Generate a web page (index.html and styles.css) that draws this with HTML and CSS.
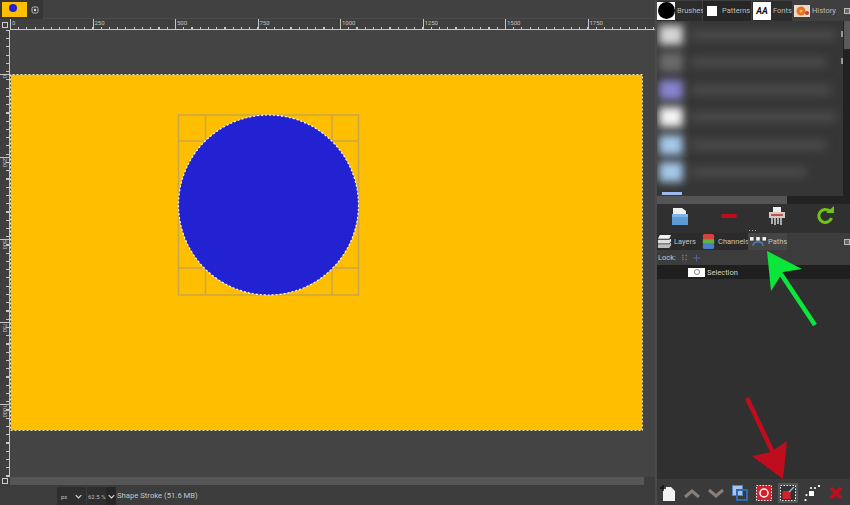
FILE: index.html
```html
<!DOCTYPE html>
<html lang="en">
<head>
<meta charset="utf-8">
<title>Shape Stroke</title>
<link rel="stylesheet" href="styles.css">
</head>
<body>
<div class="app">
  <section class="left">
    <div class="image-tabs">
      <div class="image-tab">
        <div class="thumb"><span class="thumb-dot"></span></div>
        <svg class="close" viewBox="0 0 8 8"><rect x="1" y="1" width="6" height="6" rx="1.5" fill="none" stroke="#bbb" stroke-width="1"/><circle cx="4" cy="4" r="1.2" fill="#ddd"/></svg>
      </div>
    </div>
    <div class="h-ruler-row">
      <div class="corner"><span class="corner-mark"></span></div>
      <div class="h-ruler">
        <span class="tick-label">0</span><span class="tick-label">250</span><span class="tick-label">500</span><span class="tick-label">750</span><span class="tick-label">1000</span><span class="tick-label">1250</span><span class="tick-label">1500</span><span class="tick-label">1750</span>
      </div>
    </div>
    <div class="work">
      <div class="v-ruler">
        <span class="v-label">0</span><span class="v-label">250</span><span class="v-label">500</span><span class="v-label">750</span><span class="v-label">1000</span>
      </div>
      <div class="canvas">
        <div class="image">
          <svg class="art" viewBox="0 0 633 357">
            <g fill="none" stroke="#c9a64a" stroke-width="1.5">
              <rect x="168.500" y="41" width="180" height="180"/>
              <path d="M195.500 41v180M322 41v180M168.500 67h180M168.500 194h180"/>
            </g>
            <circle cx="258.500" cy="131" r="90" fill="#2222d2"/>
            <circle cx="258.500" cy="131" r="90" fill="none" stroke="#fff" stroke-width="1.200" stroke-dasharray="2 2"/>
            <rect x="0.500" y="0.500" width="632" height="356" fill="none" stroke="#ffe9a0" stroke-width="1"/>
            <rect x="0.500" y="0.500" width="632" height="356" fill="none" stroke="#4a4a3a" stroke-width="1" stroke-dasharray="2 2"/>
          </svg>
        </div>
      </div>
    </div>
    <div class="h-scroll-row">
      <div class="corner-bottom"><span class="corner-mark"></span></div>
      <div class="h-scroll"></div>
    </div>
    <div class="status">
      <div class="select unit">px<svg class="chev" viewBox="0 0 10 6"><path d="M1 1l4 4 4-4" fill="none" stroke="#ddd" stroke-width="1.500"/></svg></div>
      <div class="select zoom">62.5 %<span class="chev-box"><svg class="chev" viewBox="0 0 10 6"><path d="M1 1l4 4 4-4" fill="none" stroke="#ddd" stroke-width="1.500"/></svg></span></div>
      <span class="status-text">Shape Stroke (51.6 MB)</span>
    </div>
  </section>

  <aside class="dock">
    <div class="dock-tabs">
      <div class="dock-tab tab-brushes"><span class="ico white-ico"><span class="brush-dot"></span></span>Brushes</div>
      <div class="dock-tab tab-patterns"><span class="ico"><span class="pattern-sq"></span></span>Patterns</div>
      <div class="dock-tab tab-fonts"><span class="ico white-ico font-ico">AA</span>Fonts</div>
      <div class="dock-tab tab-plain">
        <svg class="ico-history" viewBox="0 0 16 12"><rect width="16" height="12" fill="#e9dccb"/><circle cx="7" cy="6" r="4.500" fill="#e8702a"/><circle cx="7" cy="6" r="1.500" fill="#f5c13c"/><circle cx="13" cy="8" r="2" fill="#c8452a"/></svg>History
      </div>
      <span class="dock-menu"></span>
    </div>
    <div class="font-panel">
      <div class="font-list">
        <div class="font-row"><span class="blob blob-grey"></span><span class="blur-line line-a"></span></div>
        <div class="font-row"><span class="blob blob-dim"></span><span class="blur-line line-b"></span></div>
        <div class="font-row"><span class="blob blob-violet"></span><span class="blur-line line-c"></span></div>
        <div class="font-row"><span class="blob blob-white"></span><span class="blur-line line-a"></span></div>
        <div class="font-row"><span class="blob blob-blue"></span><span class="blur-line line-d"></span></div>
        <div class="font-row"><span class="blob blob-blue"></span><span class="blur-line line-e"></span></div>
        <span class="selected-bit"></span>
        <span class="row-mark mark-one"></span>
        <span class="row-mark mark-two"></span>
      </div>
      <div class="list-scroll"><span class="list-thumb"></span></div>
    </div>
    <div class="list-hscroll"><span class="list-hthumb"></span></div>
    <div class="font-actions">
      <svg class="act" viewBox="0 0 20 20"><path d="M3 2h9l4 3v5H3z" fill="#f1f1f1"/><path d="M2 8h16v11H2z" fill="#5b9bd8"/><path d="M2 8h16v3H2z" fill="#7fb4e6"/></svg>
      <svg class="act" viewBox="0 0 20 20"><rect x="2" y="8" width="16" height="4" rx="2" fill="#c00d1e"/></svg>
      <svg class="act" viewBox="0 0 20 20"><rect x="6" y="1" width="8" height="6" fill="#eee"/><rect x="2" y="6" width="16" height="6" fill="#d9c9bd"/><rect x="4" y="8" width="12" height="2" fill="#b55"/><path d="M5 12v6M8 12v7M11 12v6M14 12v7" stroke="#eee" stroke-width="1.300"/></svg>
      <svg class="act" viewBox="0 0 20 20"><path d="M15.500 12a6.500 6.500 0 1 1-2-7" fill="none" stroke="#71c416" stroke-width="3"/><path d="M10 7h8V0z" fill="#71c416"/></svg>
    </div>
    <div class="panel-tabs">
      <div class="panel-tab tab-layers">
        <svg class="pt-ico" viewBox="0 0 16 18"><path d="M3 2h12l-2 4H1z" fill="#f4f4f4"/><path d="M1 7h12l2-1v3l-2 2H1z" fill="#ddd"/><path d="M1 12h12l2-2v3l-2 3H1z" fill="#bbb"/></svg>Layers
      </div>
      <div class="panel-tab tab-channels">
        <svg class="pt-ico" viewBox="0 0 14 18"><rect x="1" y="1" width="12" height="6" rx="2" fill="#d6433a"/><rect x="1" y="6.500" width="12" height="5" fill="#5fb244"/><rect x="1" y="11" width="12" height="6" rx="2" fill="#4a7fc4"/></svg>Channels
      </div>
      <div class="panel-tab active">
        <span class="tab-dots"></span>
        <svg class="pt-ico wide" viewBox="0 0 18 14"><path d="M3 12C4 6 14 6 15 12" fill="none" stroke="#4f87c7" stroke-width="1.300"/><rect x="0" y="2" width="4" height="4" fill="#f4f4f4"/><rect x="7" y="2" width="4" height="4" fill="#f4f4f4"/><rect x="14" y="2" width="4" height="4" fill="#f4f4f4"/></svg>Paths
      </div>
      <span class="dock-menu"></span>
    </div>
    <div class="lock-row">Lock:
      <svg class="lock-ico" viewBox="0 0 8 10"><path d="M2 1v8M6 1v3M6 6v3" stroke="#9a9a9a" stroke-width="1.200" stroke-dasharray="1.500 1"/></svg>
      <svg class="lock-ico" viewBox="0 0 10 10"><path d="M5 0v10M0 5h10" stroke="#47679a" stroke-width="1.500"/></svg>
    </div>
    <div class="path-row">
      <span class="path-thumb"><span class="path-ring"></span></span>Selection
    </div>
    <div class="path-empty"></div>
    <div class="path-tools">
      <svg class="tool" viewBox="0 0 16 16"><path d="M3 2h8l4 4v10H3z" fill="#f2f2f2"/><path d="M3 0v6M0 3h6" stroke="#111" stroke-width="1.500"/></svg>
      <svg class="tool" viewBox="0 0 16 16"><path d="M1 12l7-6 7 6" fill="none" stroke="#8a7f76" stroke-width="3"/></svg>
      <svg class="tool" viewBox="0 0 16 16"><path d="M1 5l7 6 7-6" fill="none" stroke="#8a7f76" stroke-width="3"/></svg>
      <svg class="tool" viewBox="0 0 16 16"><rect x="0.500" y="0.500" width="10" height="10" fill="#a9c4e6" stroke="#4f87c7"/><rect x="5" y="5" width="10" height="10" fill="none" stroke="#2d6bb5" stroke-width="2"/></svg>
      <svg class="tool" viewBox="0 0 16 16"><rect x="0.500" y="0.500" width="15" height="15" fill="#d2202c" stroke="#fff" stroke-dasharray="1.500 1.500"/><circle cx="8" cy="8" r="4" fill="none" stroke="#fff" stroke-width="1.500"/></svg>
      <span class="tool-active">
        <svg class="tool" viewBox="0 0 16 16"><rect x="0.500" y="0.500" width="15" height="15" fill="#333" stroke="#eee" stroke-dasharray="1.500 1.500"/><rect x="2.500" y="6" width="8" height="8" fill="#d2202c"/><path d="M9 7l5-5" stroke="#9cc0e8" stroke-width="1.200"/></svg>
      </span>
      <svg class="tool" viewBox="0 0 16 16"><rect x="5" y="6" width="5" height="5" fill="#fff"/><circle cx="1.500" cy="15" r="1.100" fill="#fff"/><circle cx="2.500" cy="10" r="1.100" fill="#fff"/><circle cx="7" cy="3" r="1.100" fill="#fff"/><circle cx="11" cy="3" r="1.100" fill="#fff"/><circle cx="15" cy="1" r="1.100" fill="#fff"/></svg>
      <svg class="tool" viewBox="0 0 16 16"><path d="M3 3l10 10M13 3L3 13" stroke="#c00d1e" stroke-width="3.500"/></svg>
    </div>
  </aside>
  <svg class="annotations" viewBox="0 0 850 505">
    <path d="M815 325L781 274" stroke="#0be63a" stroke-width="4.500" fill="none"/>
    <path d="M767 251L802 269L783 272L771 291z" fill="#0be63a"/>
    <path d="M747 398L775 457" stroke="#c00d1e" stroke-width="4.500" fill="none"/>
    <path d="M783 479L752 456L771 452L787 441z" fill="#c00d1e"/>
  </svg>
</div>
</body>
</html>
```
FILE: styles.css
```css
* { box-sizing: border-box; }
html, body { margin: 0; padding: 0; }
body { width: 850px; height: 505px; overflow: hidden; background: #303030; font-family: Roboto, "Liberation Sans", Arial, sans-serif; color: #cfcfcf; }
.app { position: relative; display: grid; grid-template-columns: 655px 195px; width: 850px; height: 505px; }

.left { display: flex; flex-direction: column; height: 505px; background: #3c3c3c; }
.image-tabs { height: 19px; background: #414141; display: flex; border-bottom: 1px solid #4b4b4b; }
.image-tab { width: 43px; height: 19px; background: #363636; display: flex; align-items: center; padding-left: 2px; gap: 4px; }
.thumb { width: 25px; height: 15px; background: #ffbe00; display: flex; justify-content: center; padding-top: 2px; margin-top: -1px; }
.thumb-dot { width: 8px; height: 8px; border-radius: 50%; background: #2222d2; margin-right: 3px; }
.close { width: 8px; height: 8px; }

.h-ruler-row { display: flex; height: 11px; background: #3f3f3f; }
.corner { width: 10px; display: flex; align-items: center; justify-content: center; }
.corner-mark { display: block; width: 6px; height: 6px; border: 1px solid #ccc; }
.h-ruler { flex: 1; display: flex; overflow: hidden; border-bottom: 1px solid #c8c8c8; background-image: repeating-linear-gradient(90deg, #c8c8c8 0 1px, transparent 1px 8.250px); background-size: 100% 2px; background-position: 0 100%; background-repeat: no-repeat; }
.tick-label { width: 82.500px; flex: none; border-left: 1px solid #c8c8c8; font-size: 6px; line-height: 8px; padding-left: 1px; color: #c4c4c4; }

.work { display: flex; height: 447px; }
.v-ruler { width: 10px; display: flex; flex-direction: column; padding-top: 44px; border-right: 1px solid #c8c8c8; background: #3f3f3f; background-image: repeating-linear-gradient(180deg, #c8c8c8 0 1px, transparent 1px 8.250px); background-size: 3px 100%; background-position: 100% 0; background-repeat: no-repeat; }
.v-label { height: 82.500px; flex: none; writing-mode: vertical-rl; font-size: 5.500px; line-height: 8px; color: #c4c4c4; border-top: 1px solid #c8c8c8; overflow: hidden; }
.canvas { width: 645px; padding-top: 44px; background: #444; }
.image { width: 633px; height: 357px; background: #ffbe00; }
.art { display: block; width: 633px; height: 357px; }

.h-scroll-row { display: flex; height: 8px; }
.corner-bottom { width: 10px; display: flex; align-items: center; justify-content: center; }
.h-scroll { flex: 1; background: #565656; margin-right: 11px; }

.status { flex: 1; display: flex; align-items: flex-end; padding-left: 57px; background: #3c3c3c; font-size: 7.700px; }
.select { height: 18px; background: #2e2e2e; display: flex; align-items: center; color: #bbb; font-size: 6px; }
.unit { width: 29px; padding: 0 4px; justify-content: space-between; }
.zoom { width: 29px; padding-left: 1px; margin-left: 1px; overflow: hidden; justify-content: space-between; white-space: nowrap; }
.chev-box { width: 11px; flex: none; height: 18px; display: flex; align-items: center; justify-content: center; background: #262626; }
.chev { width: 7px; height: 5px; flex: none; }
.status-text { margin-left: 1px; color: #c6c6c6; white-space: nowrap; line-height: 18px; }

.dock { display: flex; flex-direction: column; height: 505px; background: #303030; border-left: 2px solid #4a4a4a; }
.dock-tabs { display: flex; height: 21px; align-items: center; gap: 1px; background: #3f3f3f; font-size: 7.500px; position: relative; }
.dock-tab { display: flex; align-items: center; gap: 2px; height: 20px; background: #2c2c2c; color: #bdbdbd; flex: none; white-space: nowrap; }
.tab-brushes { width: 45px; }
.tab-patterns { width: 48px; background: #262626; gap: 1px; }
.tab-fonts { width: 40px; padding-left: 1px; }
.tab-plain { background: #3f3f3f; padding-left: 1px; }
.ico { display: flex; align-items: center; justify-content: center; width: 18px; height: 18px; flex: none; }
.white-ico { background: #fff; }
.brush-dot { width: 17px; height: 17px; border-radius: 50%; background: #000; }
.pattern-sq { width: 10px; height: 10px; background: #fff; }
.font-ico { color: #111; font-size: 9px; font-weight: bold; font-style: italic; }
.ico-history { width: 16px; height: 12px; flex: none; }
.dock-menu { position: absolute; right: 0; width: 6px; height: 6px; border: 1px solid #bbb; background: #666; }

.font-panel { display: flex; height: 175px; background: #333; }
.font-list { position: relative; width: 186px; padding-left: 2px; overflow: hidden; background: #363636; }
.font-row { display: flex; align-items: center; gap: 8px; height: 27.500px; }
.blob { width: 24px; height: 20px; filter: blur(4px); flex: none; }
.blob-grey { background: #d6d6d6; }
.blob-dim { background: #6a6a6a; }
.blob-violet { background: #8884cf; }
.blob-white { background: #f4f4f4; }
.blob-blue { background: #a6c8ea; }
.blur-line { height: 10px; background: #4c4c4c; filter: blur(5px); }
.line-a { width: 145px; }
.line-b { width: 135px; }
.line-c { width: 140px; }
.line-d { width: 135px; }
.line-e { width: 115px; }
.selected-bit { position: absolute; left: 5px; top: 171px; width: 20px; height: 3px; background: #9db8ee; }
.row-mark { position: absolute; right: 0; width: 2px; height: 6px; background: #999; }
.mark-one { top: 10px; }
.mark-two { top: 37px; }
.list-scroll { flex: 1; background: #222; padding-left: 1px; }
.list-thumb { display: block; height: 28px; background: #5a5a5a; }
.list-hscroll { height: 8px; background: #222; }
.list-hthumb { display: block; width: 130px; height: 8px; background: #555; }

.font-actions { display: flex; height: 29px; align-items: center; padding: 0 0 5px 13px; gap: 28.500px; background: #303030; }
.act { width: 20px; height: 20px; flex: none; }

.panel-tabs { display: flex; height: 17px; font-size: 7.500px; background: #3c3c3c; position: relative; align-items: center; }
.panel-tab { display: flex; align-items: center; height: 17px; background: #2b2b2b; color: #c2c2c2; flex: none; white-space: nowrap; }
.tab-layers { width: 44px; gap: 2px; }
.tab-channels { width: 47px; gap: 2px; }
.panel-tab.active { position: relative; width: 39px; gap: 2px; background: #454545; padding-left: 2px; }
.tab-dots { position: absolute; left: 1px; top: -3px; width: 9px; height: 1px; background: repeating-linear-gradient(90deg, #aaa 0 1px, transparent 1px 3px); }
.pt-ico { width: 15px; height: 17px; flex: none; }
.pt-ico.wide { width: 16px; height: 13px; }

.lock-row { display: flex; align-items: center; gap: 3px; height: 15px; padding-left: 1px; background: #3c3c3c; font-size: 7.500px; color: #c8c8c8; }
.lock-ico { width: 7px; height: 8px; margin-left: 2px; }
.path-row { display: flex; align-items: center; gap: 2px; height: 14px; padding-left: 31px; background: #1f1f1f; font-size: 7.500px; color: #d0d0d0; }
.path-thumb { display: flex; justify-content: center; padding-top: 1px; width: 17px; height: 9px; background: #fff; }
.path-ring { width: 6px; height: 6px; border: 1px solid #888; border-radius: 50%; }
.path-empty { flex: 1; background: #303030; }
.path-tools { display: flex; align-items: center; height: 26px; padding: 1px 0 0 3px; gap: 8px; background: #3a3a3a; }
.tool { display: block; width: 16px; height: 16px; flex: none; }
.tool-active { display: flex; align-items: center; justify-content: center; width: 20px; height: 20px; margin: 0 -2px; background: #555; flex: none; }

.annotations { position: absolute; left: 0; top: 0; width: 850px; height: 505px; pointer-events: none; }
```
